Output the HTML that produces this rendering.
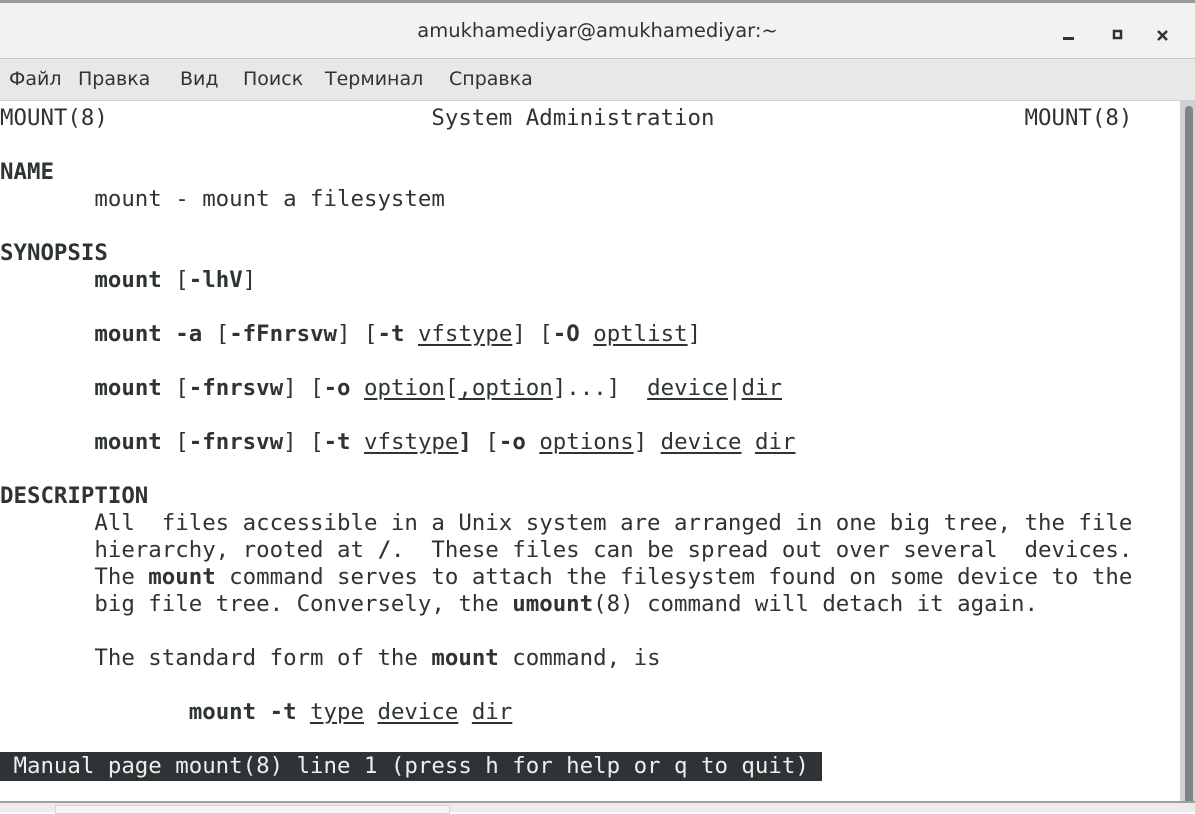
<!DOCTYPE html>
<html><head><meta charset="utf-8"><style>
*{margin:0;padding:0;box-sizing:border-box}
body{width:1195px;height:812px;overflow:hidden;background:#fff;position:relative;font-family:"Liberation Sans","DejaVu Sans",sans-serif}
#title{position:absolute;left:0;top:0;width:1195px;height:59px;background:#f2f2f2;border-top:3px solid #9a9a9a;border-bottom:1px solid #c8c8c8}
#title .t{position:absolute;left:0;right:0;top:16px;text-align:center;font-family:"DejaVu Sans",sans-serif;font-size:19.5px;color:#2e3436}
#menu{position:absolute;left:0;top:59px;width:1195px;height:42px;background:#e8e8e8;border-bottom:1px solid #d0d0d0;font-family:"DejaVu Sans",sans-serif;font-size:19px;color:#2e3436}
#menu span{position:absolute;top:9px}
#term{position:absolute;left:0;top:105px;width:1180px;height:696px;background:#fff}
pre{position:absolute;left:0;top:0;font-family:"DejaVu Sans Mono",monospace;font-size:22.4px;line-height:27px;color:#2e3436;white-space:pre}
b{font-weight:bold}
u{text-decoration:underline;text-underline-offset:3px}
.st{background:#2e3436;color:#eeeeec;display:inline-block;height:29px;line-height:29px;vertical-align:top;margin-top:-1px}
#sb{position:absolute;left:1180px;top:101px;width:15px;height:700px;background:#cfd0cf}
#thumb{position:absolute;left:1185px;top:106px;width:8px;height:700px;background:#7f8384;border-radius:4px}
#bot{position:absolute;left:0;top:801px;width:1195px;height:11px;background:#ececec;border-top:2px solid #a0a0a0}
#bot div{position:absolute;left:55px;top:2px;width:395px;height:9px;background:#f6f6f6;border:1px solid #d4d4d4}
</style></head><body>
<div id="title"><div class="t">amukhamediyar@amukhamediyar:~</div>
<svg style="position:absolute;left:1063px;top:25px" width="110" height="16"><rect x="0" y="9" width="11" height="3" fill="#2e3436"/><rect x="51" y="3" width="7" height="7" fill="none" stroke="#2e3436" stroke-width="2.5"/><path d="M95 3 L104 12 M104 3 L95 12" stroke="#2e3436" stroke-width="2.5"/></svg>
</div>
<div id="menu"><span style="left:9px">Файл</span><span style="left:78px">Правка</span><span style="left:180px">Вид</span><span style="left:243px">Поиск</span><span style="left:325px">Терминал</span><span style="left:449px">Справка</span></div>
<div id="term"><pre>MOUNT(8)                        System Administration                       MOUNT(8)

<b>NAME</b>
       mount - mount a filesystem

<b>SYNOPSIS</b>
       <b>mount</b> [<b>-lhV</b>]

       <b>mount -a</b> [<b>-fFnrsvw</b>] [<b>-t</b> <u>vfstype</u>] [<b>-O</b> <u>optlist</u>]

       <b>mount</b> [<b>-fnrsvw</b>] [<b>-o</b> <u>option</u>[<u>,option</u>]...]  <u>device</u>|<u>dir</u>

       <b>mount</b> [<b>-fnrsvw</b>] [<b>-t</b> <u>vfstype</u><b>]</b> [<b>-o</b> <u>options</u>] <u>device</u> <u>dir</u>

<b>DESCRIPTION</b>
       All  files accessible in a Unix system are arranged in one big tree, the file
       hierarchy, rooted at <b>/</b>.  These files can be spread out over several  devices.
       The <b>mount</b> command serves to attach the filesystem found on some device to the
       big file tree. Conversely, the <b>umount</b>(8) command will detach it again.

       The standard form of the <b>mount</b> command, is

              <b>mount -t</b> <u>type</u> <u>device</u> <u>dir</u>

<span class="st"> Manual page mount(8) line 1 (press h for help or q to quit) </span></pre></div>
<div id="sb"></div><div id="thumb"></div>
<div id="bot"><div></div></div>
</body></html>
